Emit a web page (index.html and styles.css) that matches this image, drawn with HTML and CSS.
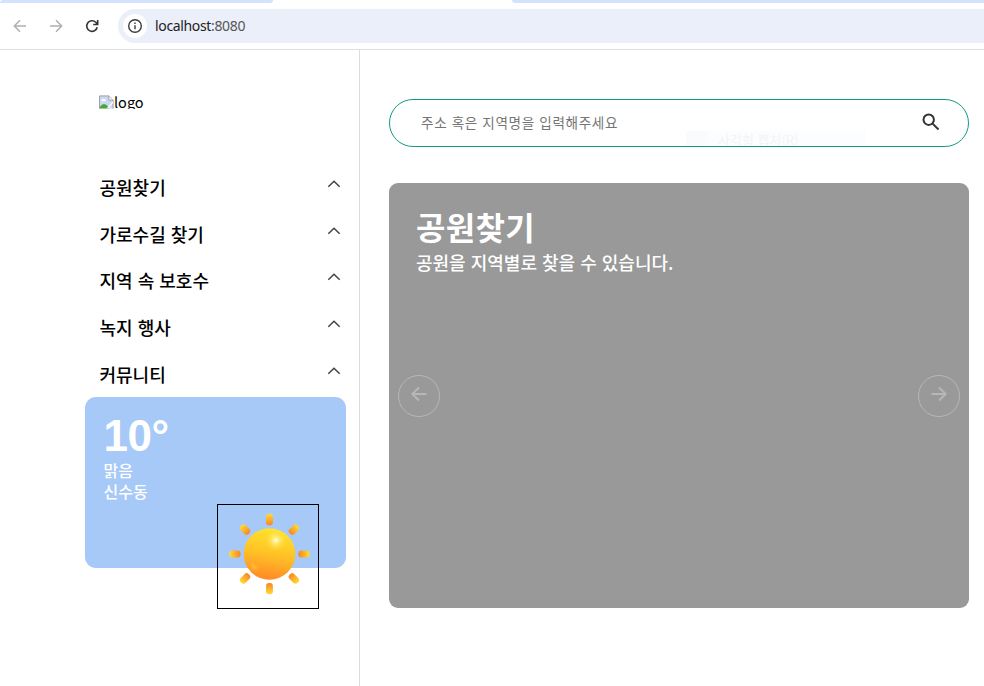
FILE: index.html
```html
<!DOCTYPE html>
<html lang="ko">
<head>
<meta charset="utf-8">
<title>localhost:8080</title>
<link rel="stylesheet" href="styles.css">
</head>
<body>
<header class="browser">
  <div class="tabs"><span class="tab-left"></span><span class="tab-right"></span></div>
  <div class="toolbar">
    <svg class="nav-icon dim" viewBox="0 0 16 16"><path d="M14 8H2.5M8 2.3 2.3 8 8 13.7"/></svg>
    <svg class="nav-icon dim" viewBox="0 0 16 16"><path d="M2 8h11.5M8 2.3 13.7 8 8 13.7"/></svg>
    <svg class="nav-icon reload" viewBox="0 0 16 16"><path d="M13.2 9.2A5.3 5.3 0 1 1 11.8 4.3L13.4 6M13.7 2v4.5H9.2"/></svg>
    <div class="address">
      <span class="info"><svg viewBox="0 0 16 16"><circle cx="8" cy="8" r="6.3"/><path d="M8 7.3v4M8 4.5v1.6"/></svg></span>
      <span class="url">localhost<span class="port">:8080</span></span>
    </div>
  </div>
</header>
<div class="page">
  <aside class="sidebar">
    <div class="logo">
      <svg viewBox="0 0 16 14"><path d="M.5 14V.5h10l4.500 4.500v9" fill="#c8d8f5" stroke="#9b9b9b"/><path d="M10.500.5V5H15" fill="#fff" stroke="#9b9b9b"/><ellipse cx="5" cy="5" rx="2.500" ry="1.300" fill="#fff"/><path d="M1 14v-2q4-6 9 0l1 2z" fill="#4ea33c"/><path d="M8 14 15 6v2l-5 6z" fill="#fff"/></svg>
      <span>logo</span>
    </div>
    <nav class="menu">
      <a class="item">공원찾기<svg viewBox="0 0 14 8"><path d="M1.300 6.700 7 1.200l5.700 5.500"/></svg></a>
      <a class="item">가로수길 찾기<svg viewBox="0 0 14 8"><path d="M1.300 6.700 7 1.200l5.700 5.500"/></svg></a>
      <a class="item">지역 속 보호수<svg viewBox="0 0 14 8"><path d="M1.300 6.700 7 1.200l5.700 5.500"/></svg></a>
      <a class="item">녹지 행사<svg viewBox="0 0 14 8"><path d="M1.300 6.700 7 1.200l5.700 5.500"/></svg></a>
      <a class="item">커뮤니티<svg viewBox="0 0 14 8"><path d="M1.300 6.700 7 1.200l5.700 5.500"/></svg></a>
    </nav>
    <section class="weather">
      <div class="degree">10°</div>
      <div class="info-line">맑음</div>
      <div class="info-line">신수동</div>
      <svg class="sun" viewBox="0 0 102 105">
        <defs>
          <linearGradient id="body" x1=".6" y1="0" x2=".42" y2="1"><stop offset="0" stop-color="#ffe32e"/><stop offset=".5" stop-color="#ffc226"/><stop offset="1" stop-color="#ff8826"/></linearGradient>
          <radialGradient id="shine"><stop offset="0" stop-color="#fffbe0"/><stop offset=".35" stop-color="#fff08a" stop-opacity=".7"/><stop offset="1" stop-color="#ffe338" stop-opacity="0"/></radialGradient>
          <radialGradient id="glow"><stop offset="0" stop-color="#ffc23a"/><stop offset="1" stop-color="#ffa526" stop-opacity="0"/></radialGradient>
          <linearGradient id="ray" x1="0" y1="0" x2="0" y2="1"><stop offset="0" stop-color="#ffdc32"/><stop offset="1" stop-color="#f98428"/></linearGradient>
        </defs>
        <g fill="url(#ray)">
          <rect id="r" x="49" y="9" width="7" height="11.500" rx="3"/>
          <use href="#r" transform="rotate(45 52.500 50)"/>
          <use href="#r" transform="rotate(90 52.500 50)"/>
          <use href="#r" transform="rotate(135 52.500 50)"/>
          <use href="#r" transform="rotate(180 52.500 50)"/>
          <use href="#r" transform="rotate(225 52.500 50)"/>
          <use href="#r" transform="rotate(270 52.500 50)"/>
          <use href="#r" transform="rotate(315 52.500 50)"/>
        </g>
        <circle cx="52.500" cy="50" r="26.300" fill="url(#body)"/>
        <circle cx="59" cy="36" r="11" fill="url(#shine)"/>
        <ellipse cx="37" cy="63" rx="8" ry="5" fill="url(#glow)" transform="rotate(45 37 63)"/>
      </svg>
    </section>
  </aside>
  <main class="content">
    <div class="search">
      <span class="placeholder">주소 혹은 지역명을 입력해주세요</span>
      <svg class="search-icon" viewBox="0 0 18 18"><circle cx="6.700" cy="6.700" r="5.200"/><path d="m10.600 10.600 5.900 5.900"/></svg>
      <div class="hint"><span class="hint-icon"></span>사각형 캡처(R)</div>
    </div>
    <section class="slide">
      <h1>공원찾기</h1>
      <p>공원을 지역별로 찾을 수 있습니다.</p>
      <div class="arrows">
        <svg viewBox="0 0 42 42"><circle cx="21" cy="21" r="20.500"/><path class="arrow" d="M28.500 19H14M21 12.500 14.300 19l6.700 6.500"/></svg>
        <svg viewBox="0 0 42 42"><circle cx="21" cy="21" r="20.500"/><path class="arrow" d="M13.500 19H28M21 12.500l6.700 6.500-6.700 6.500"/></svg>
      </div>
    </section>
  </main>
</div>
</body>
</html>
```
FILE: styles.css
```css
* { box-sizing: border-box; }
body {
  margin: 0;
  height: 686px;
  overflow: hidden;
  background: #fff;
  color: #000;
  font-family: "Noto Sans CJK KR", sans-serif;
}
svg { display: block; flex: none; fill: none; }
.browser { height: 50px; border-bottom: 1px solid #dedfe1; }
.tabs { height: 3px; display: flex; justify-content: space-between; }
.tab-left, .tab-right { background: #d3e3fd; }
.tab-left { width: 273px; border-radius: 5px 0 5px 0; }
.tab-right { width: 472px; border-radius: 0 0 0 8px; }
.toolbar { display: flex; align-items: center; height: 46px; padding-left: 12px; }
.nav-icon { width: 16px; height: 16px; margin-right: 20px; stroke: #333; stroke-width: 1.6; }
.nav-icon.dim { stroke: #b0b0b0; stroke-width: 1.5; }
.nav-icon.reload { margin-right: 18px; stroke-width: 1.6; }
.address {
  flex: 1;
  height: 34px;
  display: flex;
  align-items: center;
  gap: 8px;
  padding-left: 5px;
  border-radius: 17px 0 0 17px;
  background: #ebeff9;
}
.info { width: 24px; height: 24px; padding: 4px; border-radius: 50%; background: #fff; }
.info svg { width: 16px; height: 16px; stroke: #3c3c3c; stroke-width: 1.4; }
.url { font: 14px/20px "Noto Sans", sans-serif; color: #222; letter-spacing: -.35px; }
.port { color: #555; }
.page { display: flex; height: 636px; }
.sidebar { width: 360px; border-right: 1px solid #dcdcdc; padding: 45px 13px 0 85px; }
.logo { display: flex; height: 14px; overflow: hidden; margin-left: 14px; font-size: 14.500px; line-height: 14px; }
.logo svg { width: 15px; height: 14px; }
.menu { padding: 54.750px 5.500px 0 14.500px; }
.item {
  display: flex;
  justify-content: space-between;
  height: 46.750px;
  line-height: 46px;
  font-size: 18px;
  font-weight: 500;
}
.item svg { width: 14px; height: 8px; margin-top: 16px; stroke: #444; stroke-width: 1.500; }
.weather {
  position: relative;
  width: 261px;
  height: 171px;
  margin-top: -.25px;
  padding: 16px 18.500px;
  border-radius: 11px;
  background: #a6c9f7;
  color: #fff;
}
.degree { font: bold 44px/46px "Liberation Sans", sans-serif; letter-spacing: -.5px; }
.info-line { margin-top: 1px; font-size: 16px; line-height: 20px; font-weight: 500; }
.sun { position: absolute; left: 132px; top: 107px; width: 102px; height: 105px; border: 1px solid #000; }
.content { flex: 1; padding: 49px 15px 0 29px; }
.search {
  position: relative;
  display: flex;
  justify-content: space-between;
  align-items: center;
  height: 48px;
  padding: 0 28px 0 31px;
  border: 1px solid #159a82;
  border-radius: 24px;
}
.placeholder { margin-top: -3px; font-size: 13.600px; letter-spacing: .62px; color: #757575; }
.search-icon { width: 18px; height: 18px; margin-top: -2px; stroke: #333; stroke-width: 2; }
.hint {
  position: absolute;
  left: 296px;
  top: 31px;
  width: 180px;
  height: 15px;
  display: flex;
  gap: 10px;
  overflow: hidden;
  background: #fcfdfe;
  color: #f2f4f6;
  font-size: 13px;
  line-height: 18px;
}
.hint-icon { width: 22px; background: #f9fbfd; }
.slide {
  display: flex;
  flex-direction: column;
  height: 425px;
  margin-top: 36px;
  padding: 20px 9px 0;
  border-radius: 9px;
  background: #999;
  color: #fff;
}
.slide h1 { margin: 0 0 0 18px; font-size: 32px; line-height: 46px; font-weight: 700; letter-spacing: .3px; }
.slide p { margin: 0 0 0 18px; font-size: 18px; line-height: 26px; font-weight: 500; }
.arrows { display: flex; justify-content: space-between; margin-top: 100px; }
.arrows svg { width: 42px; height: 42px; stroke: #b7b7b7; }
.arrows .arrow { stroke-width: 2; }
```
